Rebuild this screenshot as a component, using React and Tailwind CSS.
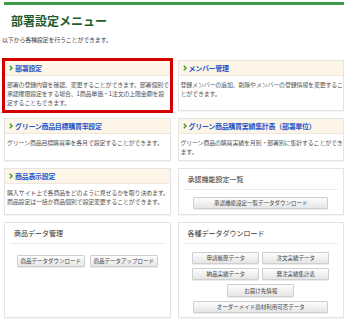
import React from 'react';

const Chevron = () => (
  <svg width="4" height="6" viewBox="0 0 4 6" className="shrink-0">
    <polyline points="0.8,0.8 3,3 0.8,5.2" fill="none" stroke="#3c9a2c" strokeWidth="1.4" />
  </svg>
);

function MenuCard({ title, lines, selected }) {
  return (
    <div
      className={`bg-white border border-[#e4e4e4] shadow-[0_1px_1px_rgba(0,0,0,0.04)] overflow-hidden ${
        selected ? 'outline-3 outline-[#d40000] outline-offset-[-1px]' : ''
      }`}
    >
      <div className="h-[15px] bg-[#fdf5e8] border-b border-[#f0e8dc] flex items-center gap-[2px] pl-[4px]">
        <Chevron />
        <span className="text-[7px] leading-[8px] font-bold tracking-[-0.3px] text-[#2455c9] whitespace-nowrap">
          {title}
        </span>
      </div>
      <div className="pl-[2px] pt-[4px] text-[6px] leading-[9px] tracking-[-0.2px] text-[#555]">
        {lines.map((l) => (
          <div key={l} className="whitespace-nowrap">{l}</div>
        ))}
      </div>
    </div>
  );
}

function Btn({ children, className = '' }) {
  return (
    <div
      className={`h-[12px] flex items-center justify-center rounded-[1px] border border-[#cfcfcf] bg-gradient-to-b from-[#fdfdfd] to-[#e6e6e6] shadow-[0_1px_0_rgba(0,0,0,0.08)] text-[5.5px] leading-[6px] text-[#444] whitespace-nowrap ${className}`}
    >
      {children}
    </div>
  );
}

function PlainCard({ title, children }) {
  return (
    <div className="bg-white border border-[#e4e4e4] shadow-[0_1px_1px_rgba(0,0,0,0.04)] px-[5px]">
      <div className="pt-[6px] pb-[6px] pl-[4px] border-b border-[#ebebeb] text-[7px] leading-[8px] text-[#333]">
        {title}
      </div>
      {children}
    </div>
  );
}

export default function App() {
  return (
    <div className="w-[348px] h-[323px] bg-white overflow-hidden font-['Noto_Sans_CJK_JP','Noto_Sans',sans-serif]">
      <div className="mx-[4px] mt-[2px] h-[3px] bg-[#3c9a48]" />
      <h1 className="ml-[11px] mt-[9px] text-[12px] leading-[14px] font-bold text-[#1d5c2c]">部署設定メニュー</h1>
      <p className="ml-[2px] mt-[8px] text-[6px] leading-[8px] tracking-[-0.2px] text-[#444]">
        以下から各種設定を行うことができます。
      </p>

      <div className="mt-[16px] mx-[4px] grid grid-cols-2 grid-rows-[51px_43px_47px_96px] gap-x-[7px] gap-y-[7px]">
        <MenuCard
          selected
          title="部署設定"
          lines={[
            '部署の登録内容を確認、変更することができます。部署個別で',
            '承認権限設定をする場合、1商品単価・1注文の上限金額を設',
            '定することもできます。',
          ]}
        />
        <MenuCard
          title="メンバー管理"
          lines={['登録メンバーの追加、削除やメンバーの登録情報を変更するこ', 'とができます。']}
        />
        <MenuCard title="グリーン商品目標購買率設定" lines={['グリーン商品目標購買率を各月で設定することができます。']} />
        <MenuCard
          title="グリーン商品購買実績集計表（部署単位）"
          lines={['グリーン商品の購買実績を月別・部署別に集計することができ', 'ます。']}
        />
        <MenuCard
          title="商品表示設定"
          lines={[
            '購入サイト上で各商品をどのように見せるかを取り決めます。',
            '商品設定は一括か商品個別で設定変更することができます。',
          ]}
        />
        <PlainCard title="承認機能設定一覧">
          <div className="flex justify-center pt-[7px]">
            <Btn className="w-[135px]">承認機能設定一覧データダウンロード</Btn>
          </div>
        </PlainCard>
        <PlainCard title="商品データ管理">
          <div className="flex justify-center gap-[5px] pt-[11px]">
            <Btn className="w-[68px]">商品データダウンロード</Btn>
            <Btn className="w-[68px]">商品データアップロード</Btn>
          </div>
        </PlainCard>
        <PlainCard title="各種データダウンロード">
          <div className="flex flex-col items-center gap-[4px] pt-[8px]">
            <div className="flex gap-[3px]">
              <Btn className="w-[67px]">申請履歴データ</Btn>
              <Btn className="w-[67px]">注文実績データ</Btn>
            </div>
            <div className="flex gap-[3px]">
              <Btn className="w-[67px]">納品実績データ</Btn>
              <Btn className="w-[67px]">発注実績集計表</Btn>
            </div>
            <Btn className="w-[67px] h-[13px]">お届け先情報</Btn>
            <Btn className="w-[135px]">オーダーメイド商材利用可否データ</Btn>
          </div>
        </PlainCard>
      </div>
    </div>
  );
}
